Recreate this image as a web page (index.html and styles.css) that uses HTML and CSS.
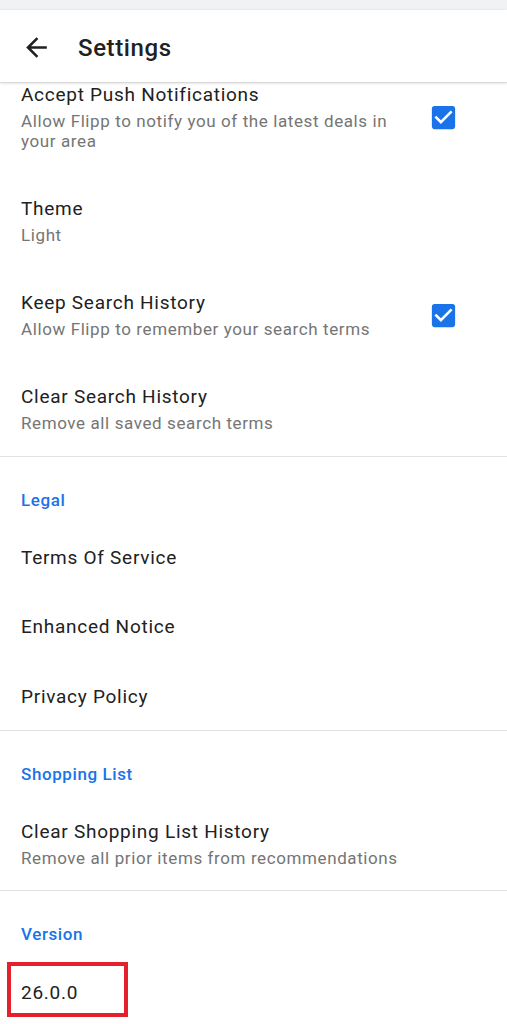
FILE: index.html
```html
<!DOCTYPE html>
<html>
<head>
<meta charset="utf-8">
<link rel="stylesheet" href="styles.css">
</head>
<body>
<div class="status"></div>
<header class="appbar">
  <svg class="back" viewBox="0 0 24 24"><path d="M20 11H7.83l5.59-5.59L12 4l-8 8 8 8 1.41-1.41L7.83 13H20v-2z"/></svg>
  <h1 class="title">Settings</h1>
</header>
<main class="content">
  <section class="group">
    <div class="item sub">
      <div class="text">
        <div class="label">Accept Push Notifications</div>
        <div class="desc">Allow Flipp to notify you of the latest deals in your area</div>
      </div>
      <svg class="check" viewBox="0 0 24 24"><path d="M19 3H5c-1.11 0-2 .9-2 2v14c0 1.1.89 2 2 2h14c1.11 0 2-.9 2-2V5c0-1.1-.89-2-2-2zm-9 14l-5-5 1.41-1.41L10 14.17l7.59-7.59L19 8l-9 9z"/></svg>
    </div>
    <div class="item sub">
      <div class="text">
        <div class="label">Theme</div>
        <div class="desc">Light</div>
      </div>
    </div>
    <div class="item sub">
      <div class="text">
        <div class="label">Keep Search History</div>
        <div class="desc">Allow Flipp to remember your search terms</div>
      </div>
      <svg class="check" viewBox="0 0 24 24"><path d="M19 3H5c-1.11 0-2 .9-2 2v14c0 1.1.89 2 2 2h14c1.11 0 2-.9 2-2V5c0-1.1-.89-2-2-2zm-9 14l-5-5 1.41-1.41L10 14.17l7.59-7.59L19 8l-9 9z"/></svg>
    </div>
    <div class="item sub">
      <div class="text">
        <div class="label">Clear Search History</div>
        <div class="desc">Remove all saved search terms</div>
      </div>
    </div>
  </section>
  <section class="group">
    <div class="heading">Legal</div>
    <div class="item single"><div class="label">Terms Of Service</div></div>
    <div class="item single"><div class="label">Enhanced Notice</div></div>
    <div class="item single"><div class="label">Privacy Policy</div></div>
  </section>
  <section class="group">
    <div class="heading">Shopping List</div>
    <div class="item sub first">
      <div class="text">
        <div class="label">Clear Shopping List History</div>
        <div class="desc">Remove all prior items from recommendations</div>
      </div>
    </div>
  </section>
  <section class="group last">
    <div class="heading">Version</div>
    <div class="version"><span class="version-box">26.0.0</span></div>
  </section>
</main>
</body>
</html>
```
FILE: styles.css
```css
* { box-sizing: border-box; }
html, body { margin: 0; padding: 0; background: #fff; }
body {
  width: 507px;
  height: 1024px;
  overflow: hidden;
  font-family: Roboto, "Noto Sans", sans-serif;
  color: #212121;
}
.status { height: 10px; background: #f1f2f4; }
.appbar {
  position: relative;
  z-index: 2;
  height: 72px;
  background: #fff;
  display: flex;
  align-items: center;
  box-shadow: 0 1px 3px rgba(0,0,0,0.16), 0 1px 1px rgba(0,0,0,0.06);
}
.back { width: 31px; height: 31px; margin-left: 21px; margin-top: 2px; fill: #212121; }
.title {
  margin: 4px 0 0 26px;
  font-size: 24px;
  letter-spacing: 0.6px;
  font-weight: 500;
  color: #212121;
}
.content { margin-top: -22px; }
.group { border-bottom: 1px solid #e2e2e2; }
.group.last { border-bottom: none; }
.item {
  display: flex;
  align-items: center;
  padding: 0 48px 0 21px;
}
.item.sub { padding-top: 23px; padding-bottom: 23px; }
.item.sub.first { padding-top: 25.5px; padding-bottom: 22px; }
.item.single { padding-top: 24.5px; padding-bottom: 21px; }
.text { flex: 1; padding-right: 20px; }
.label { font-size: 19px; line-height: 24px; letter-spacing: 0.73px; color: #212121; }
.desc { margin-top: 4px; font-size: 17px; line-height: 20px; letter-spacing: 0.6px; color: #757575; }
.check { width: 31px; height: 31px; fill: #1a73e8; flex: none; }
.heading {
  padding: 33px 21px 11px;
  font-size: 17px;
  line-height: 20px;
  letter-spacing: 0.6px;
  font-weight: 500;
  color: #1a73e8;
}
.version { padding: 7px 0 0 7px; }
.version-box {
  display: inline-block;
  border: 4px solid #e3202b;
  padding: 14px 46px 8px 10px;
  font-size: 19px;
  line-height: 25px;
  letter-spacing: 0.75px;
  color: #212121;
}
```
